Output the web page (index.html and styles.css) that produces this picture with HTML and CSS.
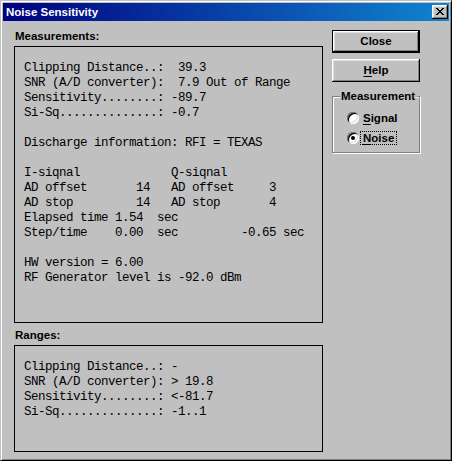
FILE: index.html
```html
<!DOCTYPE html>
<html>
<head>
<meta charset="utf-8">
<link rel="stylesheet" href="styles.css">
</head>
<body>
<div class="window">
  <div class="titlebar">
    <span class="title">Noise Sensitivity</span>
    <span class="title-close">
      <svg width="8" height="7" viewBox="0 0 8 7" shape-rendering="crispEdges"><path fill="#000" d="M0 0h2v1H0z M6 0h2v1H6z M1 1h2v1H1z M5 1h2v1H5z M2 2h4v1H2z M3 3h2v1H3z M2 4h4v1H2z M1 5h2v1H1z M5 5h2v1H5z M0 6h2v1H0z M6 6h2v1H6z"/></svg>
    </span>
  </div>
  <div class="client">
    <div class="left">
      <div class="label">Measurements:</div>
      <pre class="panel panel-main">Clipping Distance..:  39.3
SNR (A/D converter):  7.9 Out of Range
Sensitivity........: -89.7
Si-Sq..............: -0.7

Discharge information: RFI = TEXAS

I-siqnal             Q-siqnal
AD offset       14   AD offset     3
AD stop         14   AD stop       4
Elapsed time 1.54  sec
Step/time    0.00  sec         -0.65 sec

HW version = 6.00
RF Generator level is -92.0 dBm</pre>
      <div class="label label-ranges">Ranges:</div>
      <pre class="panel panel-ranges">Clipping Distance..: -
SNR (A/D converter): &gt; 19.8
Sensitivity........: &lt;-81.7
Si-Sq..............: -1..1</pre>
    </div>
    <div class="right">
      <div class="btn btn-default">Close</div>
      <div class="btn btn-help"><u>H</u>elp</div>
      <div class="group">
        <span class="group-label">Measurement</span>
        <div class="radio-row">
          <span class="radio"></span>
          <span class="radio-text"><u>S</u>ignal</span>
        </div>
        <div class="radio-row">
          <span class="radio checked"></span>
          <span class="radio-text focus"><u>N</u>oise</span>
        </div>
      </div>
    </div>
  </div>
</div>
</body>
</html>
```
FILE: styles.css
```css
html, body {
  margin: 0;
  padding: 0;
  background: #c0c0c0;
}

.window {
  width: 452px;
  height: 461px;
  box-sizing: border-box;
  background: #c0c0c0;
  border: 1px solid;
  border-color: #c0c0c0 #000 #000 #c0c0c0;
  box-shadow: inset 1px 1px #fff, inset -1px -1px #808080;
  padding: 2px;
  font-family: "Liberation Sans", Arial, sans-serif;
  font-size: 11.5px;
  font-weight: bold;
  color: #000;
}

.titlebar {
  height: 18px;
  display: flex;
  align-items: center;
  justify-content: space-between;
  padding: 0 1px 0 3px;
  background: linear-gradient(to right, #000080, #1084d0);
}

.title {
  color: #fff;
  line-height: 14px;
}

.title-close {
  width: 16px;
  height: 14px;
  box-sizing: border-box;
  background: #c0c0c0;
  box-shadow: inset -1px -1px #000, inset 1px 1px #fff, inset -2px -2px #808080, inset 2px 2px #dfdfdf;
  display: flex;
  align-items: center;
  justify-content: center;
  padding: 0 1px 1px 0;
}

.title-close svg {
  display: block;
}

.client {
  display: flex;
  gap: 9px;
  padding: 8px 0 0 11px;
}

.left {
  width: 309px;
  display: flex;
  flex-direction: column;
}

.label {
  line-height: 14px;
  height: 14px;
  padding-left: 1px;
}

.label-ranges {
  margin-top: 5px;
}

.panel {
  margin: 3px 0 0 0;
  box-sizing: border-box;
  border: 1px solid #000;
  background: #c0c0c0;
  font-family: "Liberation Mono", "Courier New", monospace;
  font-weight: normal;
  font-size: 12.5px;
  letter-spacing: -0.5px;
  line-height: 15px;
  padding: 14px 0 0 9px;
  white-space: pre;
  overflow: hidden;
}

.panel-main {
  height: 277px;
}

.panel-ranges {
  height: 107px;
}

.right {
  width: 88px;
  display: flex;
  flex-direction: column;
  padding-top: 1px;
}

.btn {
  height: 23px;
  box-sizing: border-box;
  background: #c0c0c0;
  box-shadow: inset -1px -1px #000, inset 1px 1px #fff, inset -2px -2px #808080, inset 2px 2px #dfdfdf;
  display: flex;
  align-items: center;
  justify-content: center;
  line-height: 14px;
}

.btn-default {
  border: 1px solid #000;
  padding-bottom: 1px;
}

.btn-help {
  margin-top: 6px;
  padding-bottom: 1px;
}

.btn u, .radio-text u {
  text-decoration-thickness: 1px;
  text-underline-offset: 2px;
}

.group {
  position: relative;
  margin-top: 14px;
  height: 57px;
  box-sizing: border-box;
  border: 1px solid #808080;
  box-shadow: inset 1px 1px #fff, 1px 1px #fff;
  padding: 11px 0 0 14px;
}

.group-label {
  position: absolute;
  top: -8px;
  left: 7px;
  padding: 0 2px 0 1px;
  line-height: 14px;
  background: #c0c0c0;
}

.radio-row {
  height: 20px;
  display: flex;
  align-items: center;
}

.radio {
  width: 12px;
  height: 12px;
  box-sizing: border-box;
  border-radius: 50%;
  background: #fff;
  box-shadow: inset 1px 1px #808080, inset -1px -1px #fff, inset 2px 2px #000, inset -2px -2px #dfdfdf;
  display: flex;
  align-items: center;
  justify-content: center;
  flex: none;
}

.radio.checked::after {
  content: "";
  width: 4px;
  height: 4px;
  border-radius: 50%;
  background: #000;
}

.radio-text {
  margin-left: 1px;
  padding: 0 2px;
  line-height: 12px;
  border: 1px dotted transparent;
}

.radio-text.focus {
  border-color: #000;
}
```
